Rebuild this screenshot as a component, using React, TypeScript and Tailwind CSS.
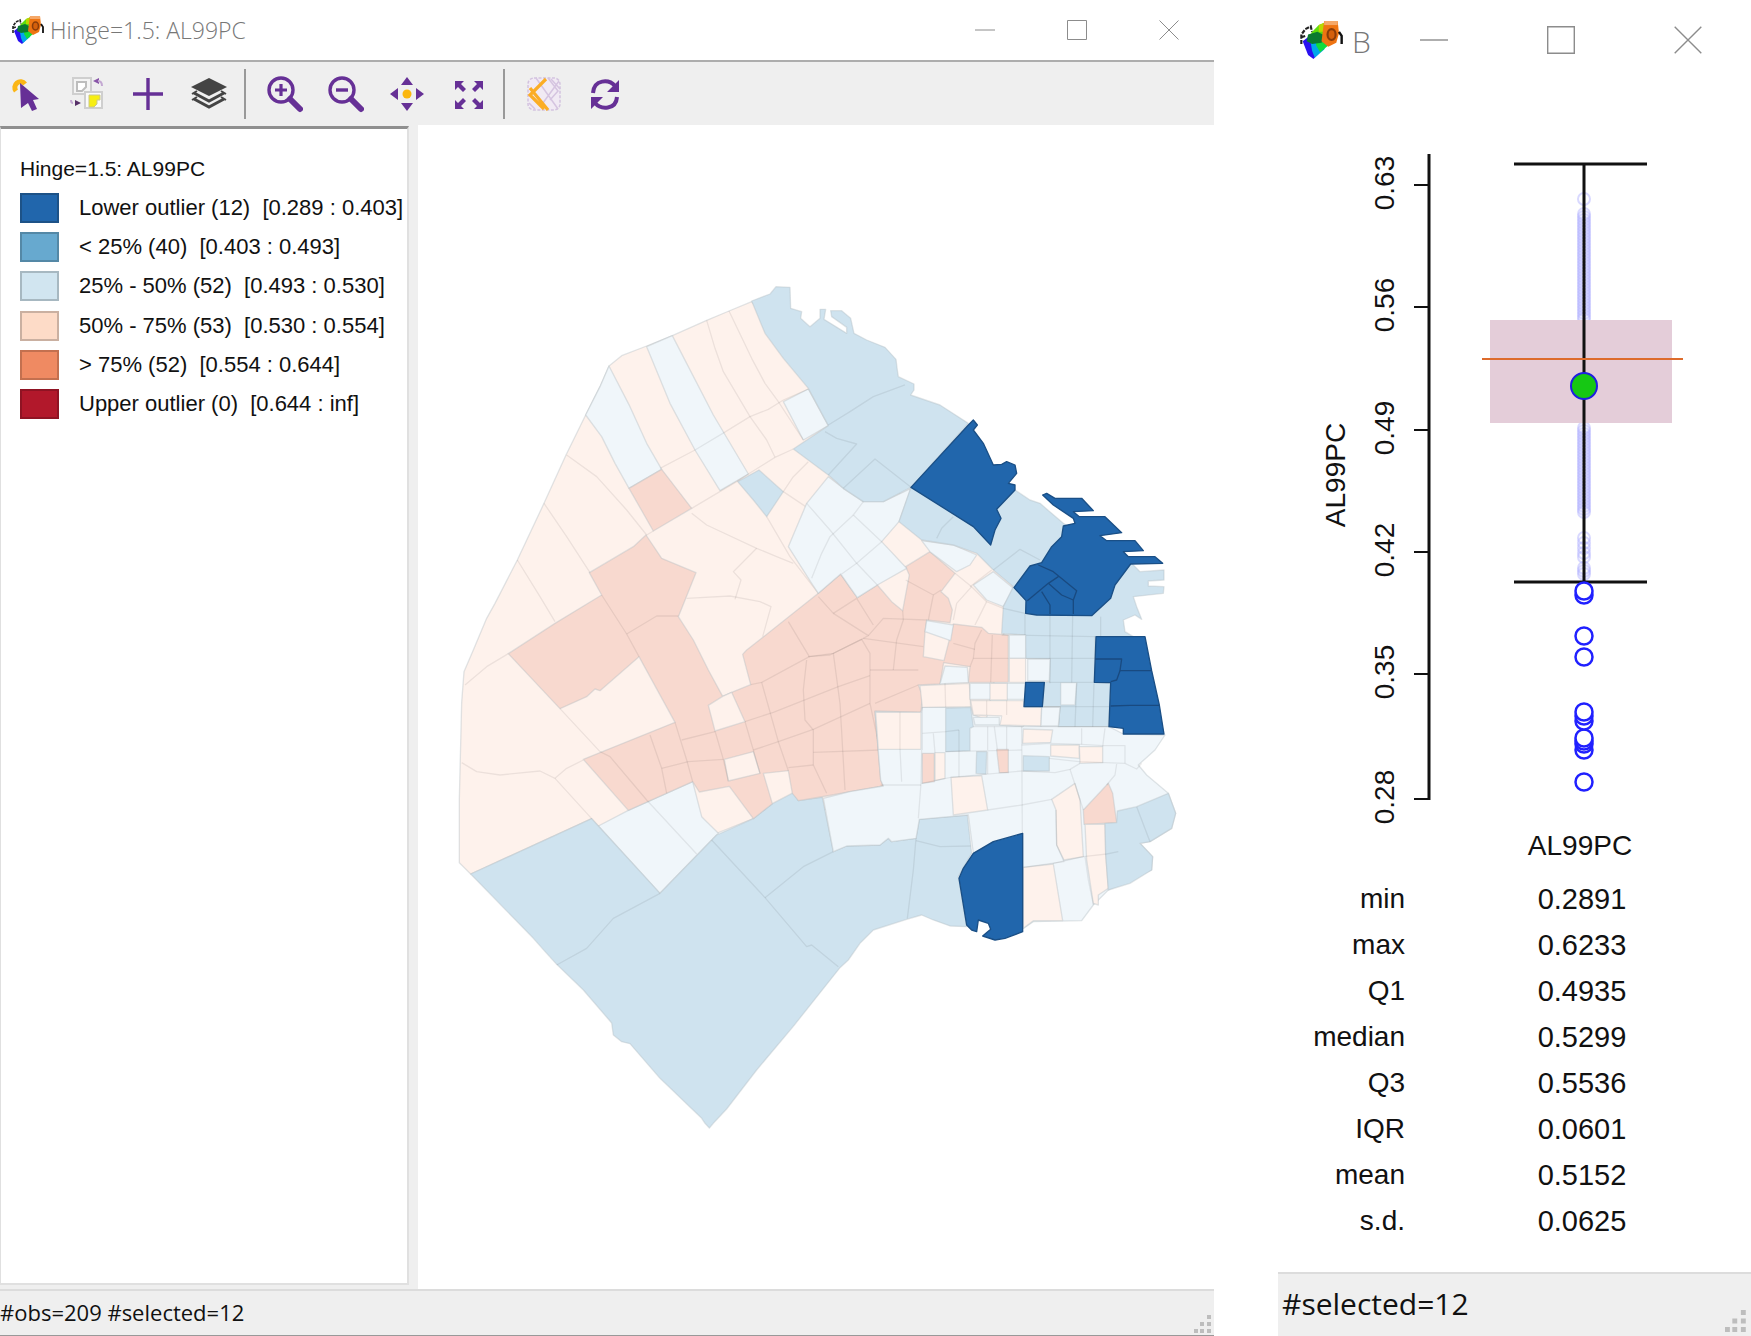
import React from "react";

const P = "#fef2ec";
const M = "#f8d9cf";
const L = "#cfe3ef";
const V = "#f0f6fa";
const D = "#2166ac";

type Shape = [fill: string, points: string];

type Sheet = { x: number; y: number; shapes: Shape[]; lines: string[]; darkLines?: string[] };

/* Census tract sheets, each in its own local grid of thirds of a pixel. */
const sheets: Sheet[] = [
  {
    x: 0,
    y: 0,
    shapes: [
      [P, "507,288 545,257 620,228 697,197 800,151 867,123 935,95 1105,300 1430,740 1640,850 1720,950 1690,1100 1600,1540 1300,1600 940,1646 830,1690 475,1668 455,1646 92,1812 58,1778 58,1587 65,1298 72,1205 100,1140 140,1045 165,1000 232,870 312,700 378,555 437,435 480,350"],
      [V, "507,288 570,410 620,520 665,598 567,655 525,580 485,500 437,435 480,350"],
      [V, "620,230 697,197 745,290 820,435 925,612 840,662 765,540 690,400"],
      [V, "1030,395 1105,357 1165,467 1090,510"],
      [L, "893,635 957,600 1030,665 980,740 940,690"],
      [M, "567,655 665,598 755,715 640,783"],
      [V, "475,1668 565,1621 758,1535 785,1640 835,1690 660,1870"],
      [L, "92,1812 455,1646 475,1668 660,1870 830,1695 940,1646 997,1601 1060,1568 1075,1592 1147,1582 1180,1745 1220,1728 1320,1725 1345,1705 1355,1715 1428,1705 1438,1648 1582,1635 1595,1750 1555,1820 1580,1970 1530,1968 1480,1950 1445,1935 1400,1948 1300,1980 1260,2020 1225,2070 1200,2093 1060,2269 950,2400 860,2517 820,2560 808,2574 795,2560 785,2545 660,2425 570,2321 545,2315 520,2295 515,2259 430,2160 350,2083 320,2050 280,2005"],
      [M, "1135,970 1202,912 1225,945 1252,983 1312,945 1355,995 1388,1022 1408,915 1397,890 1470,845 1545,910 1503,965 1525,985 1537,1020 1530,1058 1460,1050 1455,1085 1450,1160 1512,1172 1540,1062 1625,1072 1645,1090 1705,1095 1705,1237 1585,1237 1590,1190 1511,1178 1500,1242 1435,1245 1447,1275 1443,1327 1305,1323 1322,1530 1330,1548 1230,1565 1160,1578 1075,1592 1057,1570 1045,1502 970,1510 997,1601 940,1646 868,1549 778,1566 758,1535 565,1621 430,1468 705,1357 597,1160 480,1262 465,1257 440,1280 360,1316 205,1151 345,1060 485,975 448,908 580,830 618,795 665,865 768,908 715,1040 760,1110 805,1200 848,1279 875,1267 932,1244 908,1153 920,1140 965,1105"],
      [P, "848,1279 875,1267 915,1355 825,1383 805,1306"],
      [P, "853,1468 940,1445 960,1510 865,1533"],
    ],
    lines: [
      "660,595 765,540 852,488 930,440 985,418 1030,390 1105,357",
      "800,151 825,235 850,305 930,440 980,510 1005,562",
      "867,123 935,265 975,340 1015,395 1090,510",
      "755,715 890,635 925,612 1005,562 1060,537",
      "1105,575 1060,620 1030,665 1105,715 1175,775",
      "980,740 1050,860 1135,970",
      "380,555 470,620 560,720 620,795 640,783",
      "312,700 380,800 450,908",
      "232,870 300,980 345,1055",
      "205,1151 140,1190 75,1245",
      "755,730 800,765 950,835 1010,860 1060,880",
      "950,835 880,905 903,930 885,988",
      "740,985 870,978 960,995 993,1010 968,1100",
      "485,975 560,1092 597,1160",
      "560,1092 650,1038 715,1038",
      "360,1316 480,1445 510,1460 620,1590 770,1752",
      "65,1478 110,1505 180,1515 300,1503 345,1525 380,1495 430,1470",
      "345,1525 455,1646",
      "660,1870 520,1945 440,2035 350,2085",
      "815,1710 975,1883 1100,2030 1115,2025 1195,2090",
      "1180,1745 1090,1790 975,1883",
      "1428,1705 1420,1800 1402,1945",
      "1428,1712 1500,1730 1592,1728",
      "630,1395 665,1495 680,1570",
      "705,1357 740,1470 758,1535",
      "725,1410 825,1385",
      "665,1495 745,1475 850,1468",
      "825,1383 850,1468 865,1533",
      "915,1355 940,1440 960,1510",
      "915,1355 1000,1327 1195,1250 1290,1217",
      "940,1440 1015,1415 1120,1378 1290,1300",
      "932,1244 965,1237 1108,1160",
      "965,1237 1015,1415 1045,1502",
      "1045,1055 1108,1160 1180,1150 1265,1108",
      "1100,1170 1090,1260 1095,1350 1120,1380 1120,1485 1160,1570",
      "1180,1150 1200,1300 1215,1560",
      "1045,1493 1120,1485",
      "1120,1447 1320,1440",
      "1265,1108 1290,1150 1290,1300 1320,1440",
      "1290,1200 1435,1200",
      "1305,1300 1435,1245",
    ],
  },
  {
    x: 900,
    y: 0,
    shapes: [
      [V, "265,620 310,655 370,695 430,695 513,655 477,755 425,815 500,895 412,945 352,983 325,945 302,912 235,970 215,940 145,830 200,700"],
      [V, "545,812 640,825 710,855 690,885 650,905 570,845"],
      [V, "700,945 760,905 820,955 790,1010 740,990"],
      [L, "35,93 90,72 108,50 150,52 152,115 185,125 182,145 210,170 240,145 240,118 257,118 252,148 320,190 320,172 275,140 272,122 305,122 332,145 342,190 380,210 435,232 468,268 472,300 475,320 522,342 522,360 512,375 600,405 685,460 513,652 430,695 370,695 310,655 265,615 160,537 265,467 205,355 130,265 75,190"],
      [L, "513,652 700,600 825,660 870,690 900,700 970,760 1180,885 1200,905 1272,900 1272,930 1225,933 1225,948 1272,950 1270,970 1180,980 1190,1010 1205,1048 1185,1035 1150,1050 1155,1085 1180,1100 1065,1100 1063,1237 1112,1240 1105,1370 955,1370 960,1310 907,1310 913,1237 928,1235 930,1167 857,1165 855,1095 785,1090 790,1010 820,950 760,900 710,850 640,825 545,810 477,755"],
      [D, "700,450 712,465 700,480 730,520 760,585 785,583 800,575 825,585 830,610 805,640 825,645 825,660 770,718 783,745 765,780 752,825 700,770 513,652 685,465"],
      [D, "908,675 920,670 945,685 1025,685 1060,722 1000,725 1018,740 1095,740 1145,788 1080,797 1100,812 1185,812 1210,842 1150,845 1165,860 1245,860 1268,880 1172,882 1125,945 1112,985 1055,1037 890,1035 857,1030 858,992 822,953 870,888 905,878 935,830 965,800 970,768 1005,760 1000,745 940,705"],
    ],
    lines: [
      "200,700 270,780 350,880 412,945",
      "370,695 340,735 425,815 350,880 305,912",
      "340,735 270,800 245,850 215,925",
      "645,910 695,950 740,995 790,1015",
      "695,950 650,1000 640,1050",
      "740,995 705,1065",
      "690,950 755,900",
      "235,980 280,1030 385,1097 370,1105 270,1155 205,1160",
      "280,1030 350,985 400,1065",
      "385,1097 430,1045 560,1050",
      "488,1022 490,1050 470,1110 460,1200",
      "370,1105 550,1130",
      "497,930 580,975 565,1050",
      "580,975 603,960",
      "265,465 330,425 400,380 495,345",
      "255,485 290,505 350,522 265,615",
      "310,655 405,567 513,652",
      "640,740 605,775 590,805",
      "760,900 840,838 900,870",
      "790,1015 855,1030",
      "785,1095 805,1095 1065,1100",
      "855,1030 855,1165",
      "930,1035 930,1240",
      "998,1035 995,1240",
      "1082,1040 1082,1100",
      "855,1165 1065,1165",
      "928,1237 1065,1237",
    ],
    darkLines: [
      "895,885 940,905 1010,962 1000,990 965,975 925,940 955,920",
      "925,940 862,992",
      "905,965 930,1005 930,1032",
      "1000,990 1000,1032",
    ],
  },
  {
    x: 960,
    y: 930,
    shapes: [
      [V, "345,395 483,397 487,382 557,382 632,380 640,405 720,435 788,440 843,380 900,380 895,440 1047,440 1090,462 1215,465 1185,510 1135,555 1160,585 1225,640 1247,700 1235,745 1170,785 1140,790 1178,830 1175,870 1045,930 1000,975 965,1022 820,1025 790,1045 788,760 700,785 640,820 625,705 478,718 468,775 395,785 385,775 360,795 260,798 220,815 190,655 270,635 370,618 362,600"],
      [V, "500,122 580,135 572,182 495,155"],
      [V, "555,258 622,262 625,307 540,312"],
      [V, "748,165 797,165 797,235 748,235"],
      [P, "748,235 797,235 797,307 748,307"],
      [V, "803,237 870,237 868,303 803,303"],
      [P, "480,317 628,310 632,380 487,382"],
      [V, "630,310 797,310 795,358 630,358"],
      [P, "690,310 742,310 742,360 690,360"],
      [P, "632,362 790,362 795,382 845,382 843,438 720,435 725,408 640,405"],
      [V, "640,412 718,412 718,435 645,435"],
      [L, "557,385 632,382 640,440 630,445 630,512 557,515"],
      [L, "650,515 680,515 678,582 648,580"],
      [M, "710,508 745,508 745,578 718,578"],
      [M, "487,520 523,520 523,605 487,610"],
      [P, "525,518 555,518 555,595 525,602"],
      [P, "347,397 483,397 483,508 355,508"],
      [P, "790,447 878,450 872,487 788,490"],
      [P, "872,495 958,495 958,535 872,528"],
      [P, "958,500 1028,500 1028,548 960,550"],
      [L, "790,527 868,530 868,573 790,573"],
      [V, "902,308 950,308 945,375 902,375"],
      [V, "845,382 900,382 895,438 843,438"],
      [P, "573,592 665,587 683,690 580,705"],
      [P, "875,658 945,610 960,660 970,830 912,840 890,795 888,690"],
      [M, "1045,610 1058,640 1070,728 972,733 970,690"],
      [P, "975,733 1035,733 1037,822 1045,925 1015,945 1015,975 1000,970 980,840"],
      [P, "790,862 880,852 908,1022 820,1022 790,1045"],
      [L, "1072,693 1130,680 1225,640 1247,700 1235,745 1170,785 1140,790 1178,830 1175,870 1110,910 1045,930 1037,822 1035,730 1070,728"],
      [D, "1008,170 1155,170 1175,272 1198,375 1212,462 1090,462 1090,445 1047,440 1052,308 1003,307"],
      [D, "797,307 853,307 847,380 792,380"],
      [D, "788,760 788,1055 735,1075 705,1080 668,1068 692,1048 685,1030 655,1020 650,1055 635,1050 620,1035 597,895 610,865 640,820 700,785"],
    ],
    lines: [
      "555,310 557,382",
      "420,397 420,508 425,605",
      "640,235 745,235",
      "697,165 692,307",
      "665,150 645,190 640,235 630,260",
      "580,190 645,208",
      "680,362 680,405",
      "740,362 740,405",
      "640,440 790,440 1047,440",
      "487,460 557,455 597,450",
      "520,460 525,518",
      "597,450 597,515 597,590",
      "683,440 683,510",
      "703,440 712,508",
      "740,440 740,508",
      "557,515 785,510",
      "683,515 683,582",
      "785,440 787,760",
      "485,610 572,592 785,573",
      "485,510 483,610 475,715",
      "362,615 483,615",
      "683,690 785,675 875,658",
      "487,382 487,510",
      "950,310 945,440",
      "1002,310 998,440",
      "850,380 1047,380",
      "785,495 872,490 965,493 1030,497 1095,497 1095,550",
      "965,445 965,493",
      "1035,445 1028,500",
      "868,535 957,545 1095,550 1130,567 1145,550",
      "785,573 885,578 930,568 960,550",
      "930,568 970,690",
      "1070,552 1065,585 1040,615",
      "888,690 890,795 912,845 790,862",
      "880,850 970,830 1040,822 1075,815",
      "1130,680 1170,785",
      "975,830 985,900 1000,975",
    ],
    darkLines: [
      "1005,237 1085,237 1080,272 1175,272",
      "1080,272 1070,300 1052,305",
      "1052,378 1110,376 1198,376",
    ],
  },
];

function OutlierMap() {
  return (
    <svg viewBox="418 125 796 1164" className="block h-full w-full" role="img" aria-label="Hinge map of AL99PC">
      <g transform="translate(440 270) scale(.33333)" strokeLinejoin="round" fill="none">
        {sheets.map((s, i) => (
          <g key={i} transform={`translate(${s.x} ${s.y})`}>
            {s.shapes.map(([fill, points], j) => (
              <polygon key={j} points={points} fill={fill} stroke={fill === D ? "#1a4f86" : "#b4bfc2"} strokeOpacity={fill === D ? 1 : 0.4} strokeWidth={4} />
            ))}
            {s.lines.map((points, j) => (
              <polyline key={j} points={points} stroke="#000" strokeOpacity={0.07} strokeWidth={4} />
            ))}
            {s.darkLines?.map((points, j) => (
              <polyline key={j} points={points} stroke="#194a80" strokeWidth={4} />
            ))}
          </g>
        ))}
      </g>
    </svg>
  );
}

function AppLogo({ className }: { className: string }) {
  return (
    <svg viewBox="0 0 32 28" preserveAspectRatio="none" className={className} aria-hidden="true">
      <path d="M1 17V10L4 6 8 4 9 8M1 12 4 11" stroke="#222" strokeWidth="1.6" strokeDasharray="3 1" fill="none" />
      <path d="M2 15 7 11 15 15 14 24 10 28 6 25Z" fill="#2a10f0" />
      <path d="M8 16 14 12 20 15 18 21 11 27 9 22Z" fill="#00a8ea" />
      <path d="M12 13 17 8 22 12 21 18 15 23 12 18Z" fill="#12dc3c" />
      <path d="M8 9 14 3 19 1 19 9 12 12Z" fill="#5fdc0a" />
      <path d="M14 3 19 1 18 8 14 8Z" fill="#b9d800" />
      <path d="M6 10 13 8 19 11 16 16 9 17 5 15Z" fill="#0a7a30" />
      <path d="M18 0H28L29 9 27 16 21 19 16 15 17 7Z" fill="#ee7412" />
      <path d="M18 0H28V3H18Z" fill="#f5a868" />
      <ellipse cx="23.500" cy="10" rx="3" ry="4" fill="#d4600c" stroke="#8a3c0a" strokeWidth="1.600" />
      <path d="M29 8 31 11V17" stroke="#111" strokeWidth="1.800" fill="none" />
    </svg>
  );
}

const purple = "#663096";

const icons: Record<string, React.ReactNode> = {
  Select: (
    <>
      <path d="M8 16A5 5 0 1 1 17 9" stroke="#fbb615" strokeWidth="5" fill="none" />
      <path d="M12 8 31 24 25 25 29 34 24 36 20 28 13 33Z" fill={purple} />
    </>
  ),
  "Invert selection": (
    <>
      <path d="M4 3h18v16H4Z" fill="#f4f4f4" stroke="#cfcfcf" strokeWidth="2" />
      <path d="M8 7h9v5l-4 4H8Z" fill="#fff" stroke="#bdbdbd" strokeWidth="2" />
      <path d="M16 17h17v16H16Z" fill="#fafafa" stroke="#cfcfcf" strokeWidth="2" />
      <path d="M20 20h11v5h-3v4l-3 3h-5Z" fill="#f7ee12" stroke="#c9c78a" />
      <path d="m24 6 6-3v6Z" fill="#8956a8" />
      <path d="M29 6q4 0 4 5" stroke="#c4a9d3" strokeWidth="2" fill="none" />
      <path d="m12 28-6-3v6Z" fill="#573069" />
      <path d="M4 28q-2 0-2-3" stroke="#c4a9d3" strokeWidth="2" fill="none" />
    </>
  ),
  Add: <path d="M18 3V35M3 19H33" stroke={purple} strokeWidth="3.4" />,
  Layers: (
    <>
      <path d="m18 3 18 9-18 9L0 12Z" fill="#444" />
      <path d="m3 18 15 8 15-8M3 24l15 8 15-8" stroke="#444" strokeWidth="3" fill="none" />
      <path d="m1 19 5-3M35 19l-5-3M1 25l5-3M35 25l-5-3" stroke="#444" strokeWidth="2" />
    </>
  ),
  "Zoom in": (
    <>
      <circle cx="14" cy="15" r="12" stroke={purple} strokeWidth="3.4" fill="none" />
      <path d="M8 15H20M14 9V21" stroke={purple} strokeWidth="3.2" />
      <path d="m23 24 10 10" stroke={purple} strokeWidth="6" strokeLinecap="round" />
    </>
  ),
  "Zoom out": (
    <>
      <circle cx="14" cy="15" r="12" stroke={purple} strokeWidth="3.4" fill="none" />
      <path d="M8 15H20" stroke={purple} strokeWidth="3.4" />
      <path d="m23 24 10 10" stroke={purple} strokeWidth="6" strokeLinecap="round" />
    </>
  ),
  Pan: (
    <>
      <path d="m18 2 6 8H12ZM18 36l6-8H12ZM1 19l8-6v12ZM35 19l-8-6v12Z" fill={purple} />
      <circle cx="18" cy="19" r="4.5" fill="#fbb70f" />
    </>
  ),
  "Full extent": (
    <path d="M5 6h9l-3 3 5 5-3 3-5-5-3 3ZM33 6h-9l3 3-5 5 3 3 5-5 3 3ZM5 34h9l-3-3 5-5-3-3-5 5-3-3ZM33 34h-9l3-3-5-5 3-3 5 5 3-3Z" fill={purple} />
  ),
  Basemap: (
    <>
      <rect x="2" y="3" width="32" height="32" rx="6" fill="#f1eaf4" stroke="#d3c3df" strokeWidth="1.5" strokeDasharray="3 1.5" />
      <path d="m10 3 22 31M33 6 14 32M22 3l10 13-8 9M25 4l9 10M3 28l6 6" stroke="#d5c4e0" strokeWidth="1.5" fill="none" />
      <path d="M20 4 4 20 18 34M4 13 22 35" stroke="#fbad25" strokeWidth="3.2" fill="none" />
    </>
  ),
  Refresh: (
    <>
      <path d="M6 18C7 4 22 4 28 11M30 22C29 35 14 35 8 28" stroke={purple} strokeWidth="4" fill="none" />
      <path d="M32 5v12H20ZM4 34V22h12Z" fill={purple} />
    </>
  ),
};

function ToolGroup({ names }: { names: string[] }) {
  return (
    <div className="flex gap-[25px]">
      {names.map((name) => (
        <button key={name} type="button" aria-label={name} title={name} className="h-[38px] w-9">
          <svg viewBox="0 0 36 38" className="h-full w-full">{icons[name]}</svg>
        </button>
      ))}
    </div>
  );
}

function WindowButtons({ large }: { large?: boolean }) {
  const glyph = large ? "h-7 w-7" : "h-5 w-5";
  const paths: [string, string][] = [
    ["Minimize", "M0 10H20"],
    ["Maximize", "M.5 .5H19.5V19.5H.5Z"],
    ["Close", "M.5 .5 19.5 19.5M19.5 .5 .5 19.5"],
  ];
  return (
    <div className={large ? "flex gap-[99px]" : "flex gap-[72px]"}>
      {paths.map(([label, d]) => (
        <button key={label} type="button" aria-label={label}>
          <svg viewBox="0 0 20 20" className={glyph} fill="none" stroke="#8c8c8c">
            <path d={d} />
          </svg>
        </button>
      ))}
    </div>
  );
}

function Grip({ large }: { large?: boolean }) {
  return (
    <svg viewBox="0 0 18 18" className={large ? "h-[22px] w-[22px] self-end" : "h-[18px] w-[18px] self-end"} fill="#bdbdbd" aria-hidden="true">
      <path d="M13 0h4v4h-4ZM6 7h4v4H6ZM13 7h4v4h-4ZM0 14h4v4H0ZM6 14h4v4H6ZM13 14h4v4h-4Z" />
    </svg>
  );
}

const legend = [
  ["bg-[#2166ac] border-[#1d5287]", "Lower outlier (12)  [0.289 : 0.403]"],
  ["bg-[#67a9cf] border-[#5488a6]", "< 25% (40)  [0.403 : 0.493]"],
  ["bg-[#d1e5f0] border-[#a7b8c1]", "25% - 50% (52)  [0.493 : 0.530]"],
  ["bg-[#fddbc7] border-[#cab0a1]", "50% - 75% (53)  [0.530 : 0.554]"],
  ["bg-[#ef8a62] border-[#c3704f]", "> 75% (52)  [0.554 : 0.644]"],
  ["bg-[#b2182b] border-[#8f1323]", "Upper outlier (0)  [0.644 : inf]"],
];

const stats = [
  ["min", "0.2891"],
  ["max", "0.6233"],
  ["Q1", "0.4935"],
  ["median", "0.5299"],
  ["Q3", "0.5536"],
  ["IQR", "0.0601"],
  ["mean", "0.5152"],
  ["s.d.", "0.0625"],
];

const ticks: [number, string][] = [
  [185, "0.63"],
  [307, "0.56"],
  [430, "0.49"],
  [552, "0.42"],
  [674, "0.35"],
  [799, "0.28"],
];

const outliers = [591, 595, 636, 657, 712, 716, 721, 738, 741, 744, 750, 782];

const inliers = [199, ...Array.from({ length: 36 }, (_, i) => 214 + i * 3), ...Array.from({ length: 29 }, (_, i) => 428 + i * 3), 538, 543, 548, 553, 557, 568, 571, 574];

function BoxPlot() {
  return (
    <svg viewBox="1278 140 473 690" className="block w-full font-['Liberation_Sans',sans-serif]" role="img" aria-label="Box plot of AL99PC">
      <g stroke="#b4b4ff" strokeWidth="2" fill="none" strokeOpacity=".5">
        {inliers.map((y) => (
          <circle key={y} cx="1584" cy={y} r="6" />
        ))}
      </g>
      <rect x="1490" y="320" width="182" height="103" fill="#e4cdd9" />
      <g stroke="#111" strokeWidth="3" fill="none">
        <path d="M1429 154V800M1584 164V582M1514 164H1647M1514 582H1647" />
        {ticks.map(([y]) => (
          <path key={y} d={`M1414 ${y}H1429`} strokeWidth="2" />
        ))}
      </g>
      <path d="M1482 359H1683" stroke="#dd6b2c" strokeWidth="2" />
      <circle cx="1584" cy="386" r="13" fill="#16c814" stroke="#1f1fe0" strokeWidth="2" />
      <g stroke="#2020ff" strokeWidth="2.5" fill="#fff">
        {outliers.slice().reverse().map((y) => (
          <circle key={y} cx="1584" cy={y} r="8.5" />
        ))}
      </g>
      <g fontSize="28" fill="#111" textAnchor="middle">
        {ticks.map(([y, label]) => (
          <text key={label} transform={`translate(1394 ${y - 2}) rotate(-90)`}>{label}</text>
        ))}
        <text transform="translate(1345 475) rotate(-90)">AL99PC</text>
      </g>
    </svg>
  );
}

export default function App() {
  return (
    <div className="flex min-h-screen gap-16 bg-white text-[#111]">
      <section className="flex flex-1 flex-col border-b border-[#999]">
        <header className="flex h-[60px] items-center justify-between pr-[35px] pl-3">
          <div className="flex items-center gap-1.5">
            <AppLogo className="h-7 w-8" />
            <h1 className="font-['Open_Sans',sans-serif] text-[23px] leading-8 font-light text-[#777]">Hinge=1.5: AL99PC</h1>
          </div>
          <WindowButtons />
        </header>
        <div className="flex h-[65px] items-center border-t-2 border-[#adadad] bg-[#efefef] pl-2">
          <ToolGroup names={["Select", "Invert selection", "Add", "Layers"]} />
          <div className="mr-[21px] ml-[17px] h-[50px] w-0.5 bg-[#999]" />
          <ToolGroup names={["Zoom in", "Zoom out", "Pan", "Full extent"]} />
          <div className="mr-[21px] ml-[17px] h-[50px] w-0.5 bg-[#999]" />
          <ToolGroup names={["Basemap", "Refresh"]} />
        </div>
        <main className="flex flex-1 bg-[#efefef]">
          <aside className="mt-px mb-1 w-[409px] shrink-0 border-t-3 border-r-2 border-b-2 border-l border-t-[#8f8f8f] border-r-[#e0e0e0] border-b-[#e0e0e0] border-l-[#e0e0e0] bg-white pt-7 pl-[19px] font-['Liberation_Sans',sans-serif] leading-6">
            <h2 className="text-[21px] leading-6">Hinge=1.5: AL99PC</h2>
            <ul className="mt-[7px] grid h-[236px] grid-rows-6 text-[22px] leading-6">
              {legend.map(([swatch, label]) => (
                <li key={label} className="flex items-center gap-5">
                  <span className={`h-[30px] w-[39px] shrink-0 border-2 ${swatch}`} />
                  <span className="whitespace-pre">{label}</span>
                </li>
              ))}
            </ul>
          </aside>
          <div className="ml-[9px] flex-1 bg-white">
            <OutlierMap />
          </div>
        </main>
        <footer className="flex h-[46px] items-center justify-between border-t-2 border-[#dcdcdc] bg-[#efefef] pr-0.5 pb-0.5">
          <p className="font-['Open_Sans',sans-serif] text-[22px] leading-8">#obs=209 #selected=12</p>
          <Grip />
        </footer>
      </section>

      <section className="flex w-[473px] flex-col">
        <header className="flex h-[80px] items-center justify-between pr-[49px] pl-[22px]">
          <div className="flex items-center gap-[9px]">
            <AppLogo className="h-[38px] w-[43px]" />
            <h1 className="pt-1 font-['Open_Sans',sans-serif] text-[30px] leading-10 font-light text-[#777]">B</h1>
          </div>
          <WindowButtons large />
        </header>
        <div className="mt-[60px]">
          <BoxPlot />
        </div>
        <table className="w-full font-['Liberation_Sans',sans-serif] text-[28px] leading-8">
          <thead>
            <tr className="h-[46px] align-top">
              <td className="w-[127px]" />
              <th scope="col" className="pl-1 text-center font-normal">AL99PC</th>
            </tr>
          </thead>
          <tbody>
            {stats.map(([label, value]) => (
              <tr key={label} className="h-[46px]">
                <th scope="row" className="text-right font-normal">{label}</th>
                <td className="pl-2 text-center text-[29px]">{value}</td>
              </tr>
            ))}
          </tbody>
        </table>
        <footer className="mt-auto flex h-[64px] items-center justify-between border-t-2 border-[#dcdcdc] bg-[#efefef] pt-0.5 pr-1 pb-1 pl-1">
          <p className="font-['Open_Sans',sans-serif] text-[30px] leading-10">#selected=12</p>
          <Grip large />
        </footer>
      </section>
    </div>
  );
}
